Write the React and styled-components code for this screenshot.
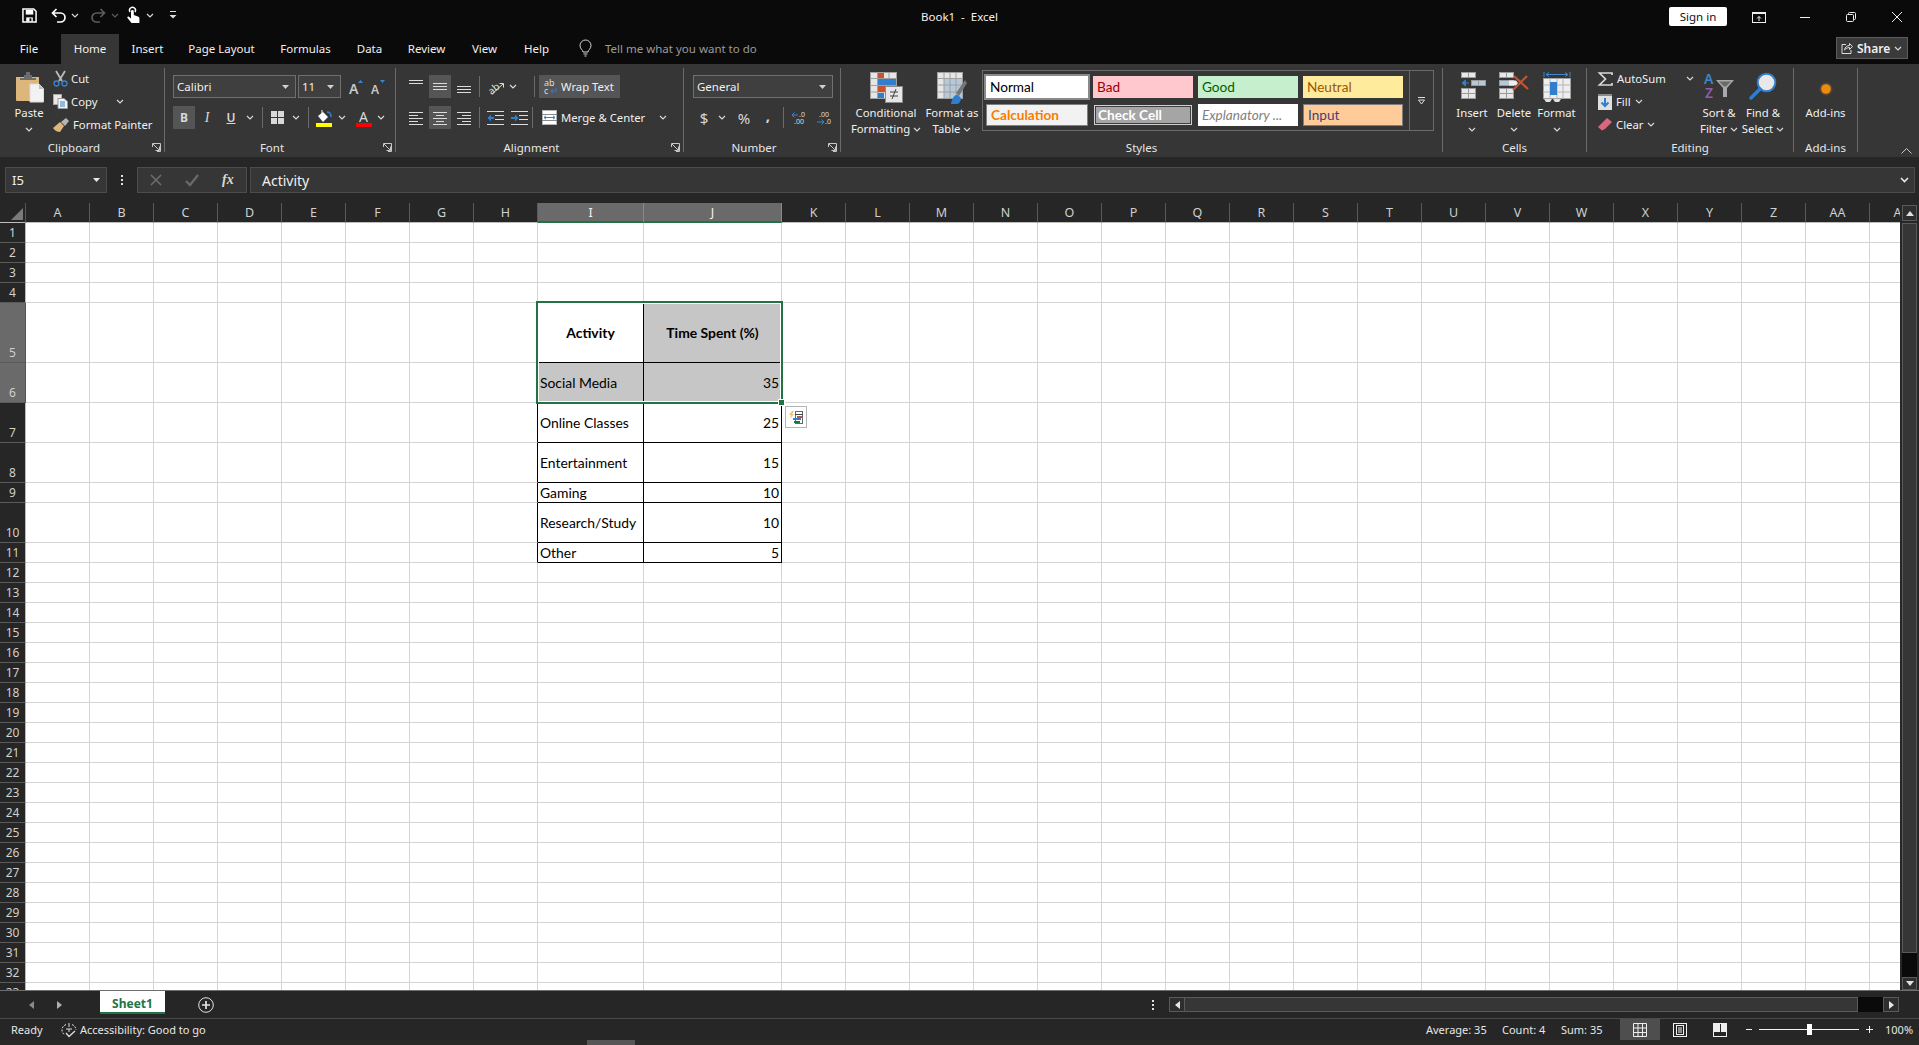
import React from 'react';
import styled, { createGlobalStyle } from 'styled-components';

const UI = '"Noto Sans", "Open Sans", sans-serif';
const CELLFONT = '"Lato", "Noto Sans", sans-serif';
const GREEN = '#217346';

const Global = createGlobalStyle`
  html, body { margin: 0; padding: 0; background: #262626; }
  * { box-sizing: border-box; }
  svg { display: block; flex: none; overflow: visible; }
`;

const Page = styled.div`
  width: 1919px;
  height: 1045px;
  overflow: hidden;
  background: #262626;
  font-family: ${UI};
  font-size: 11.3px;
  color: #f0f0f0;
  display: flex;
  flex-direction: column;
`;

/* ---------- title bar ---------- */
const TitleBar = styled.div`
  height: 34px;
  background: #0a0a0a;
  display: grid;
  grid-template-columns: 1fr auto 1fr;
  align-items: center;
`;
const Qat = styled.div`
  display: flex;
  align-items: center;
  padding-left: 22px;
  padding-bottom: 4px;
`;
const QatSlot = styled.div`
  width: ${(p) => p.$w}px;
  display: flex;
  align-items: center;
`;
const Title = styled.div`
  font-size: 11.5px;
  color: #f2f2f2;
  padding-bottom: 2px;
`;
const WinControls = styled.div`
  display: flex;
  justify-content: flex-end;
  align-items: center;
  height: 34px;
`;
const SignIn = styled.div`
  width: 58px;
  height: 19px;
  margin: 0 9px 2px 0;
  background: #fff;
  border-radius: 2px;
  color: #111;
  font-size: 11.5px;
  display: flex;
  align-items: center;
  justify-content: center;
`;
const WinBtn = styled.div`
  width: ${(p) => p.$w || 46}px;
  height: 30px;
  display: flex;
  align-items: center;
  justify-content: center;
`;

/* ---------- tab strip ---------- */
const TabStrip = styled.div`
  height: 30px;
  background: #0a0a0a;
  display: flex;
`;
const Tab = styled.div`
  width: ${(p) => p.$w}px;
  margin-left: ${(p) => p.$ml || 0}px;
  background: ${(p) => (p.$active ? '#363636' : 'transparent')};
  display: flex;
  align-items: center;
  justify-content: center;
  font-size: 11.5px;
  padding-bottom: 1px;
`;
const TellMe = styled.div`
  display: flex;
  align-items: center;
  margin-left: 17px;
  gap: 13px;
  color: #9b9b9b;
  font-size: 11.5px;
  padding-bottom: 2px;
`;
const Share = styled.div`
  margin: 3px 11px 5px auto;
  width: 72px;
  background: #3a3a3a;
  border: 1px solid #5c5c5c;
  display: flex;
  align-items: center;
  gap: 4px;
  padding-left: 4px;
  font-size: 12px;
  font-weight: 600;
`;

/* ---------- ribbon ---------- */
const Ribbon = styled.div`
  height: 93px;
  background: #363636;
  display: flex;
  position: relative;
`;
const Group = styled.div`
  width: ${(p) => p.$w}px;
  margin: 4px 0 5px;
  border-right: 1px solid #6b6b6b;
  display: flex;
  flex-direction: column;
`;
const GroupBody = styled.div`
  flex: 1;
  display: flex;
  padding-left: ${(p) => p.$pl || 0}px;
  min-height: 0;
`;
const GroupLabel = styled.div`
  height: 16px;
  margin-bottom: -4px;
  padding-right: ${(p) => (p.$launcher ? 16 : 0)}px;
  line-height: 16px;
  text-align: center;
  position: relative;
  font-size: 11.5px;
  color: #e6e6e6;
`;
const Launcher = styled.span`
  position: absolute;
  right: 3px;
  top: 3px;
`;
const Collapse = styled.span`
  position: absolute;
  right: 7px;
  bottom: 3px;
`;
const ToolRows = styled.div`
  display: flex;
  flex-direction: column;
  gap: 8px;
  padding-top: 7px;
  margin-left: ${(p) => p.$ml || 0}px;
`;
const ToolRow = styled.div`
  height: 23px;
  display: flex;
  align-items: center;
`;
const Tool = styled.div`
  width: ${(p) => p.$w}px;
  height: 23px;
  margin-left: ${(p) => p.$ml || 0}px;
  background: ${(p) => (p.$on ? '#555555' : 'transparent')};
  display: flex;
  align-items: center;
  justify-content: ${(p) => (p.$start ? 'flex-start' : 'center')};
  gap: 4px;
  padding-left: ${(p) => p.$pl || 0}px;
  white-space: nowrap;
`;
const Glyph = styled.span`
  font-family: ${(p) => (p.$serif ? '"Liberation Serif", serif' : UI)};
  font-size: ${(p) => p.$size || 12}px;
  font-weight: ${(p) => p.$weight || 400};
  font-style: ${(p) => (p.$italic ? 'italic' : 'normal')};
  text-decoration: ${(p) => (p.$under ? 'underline' : 'none')};
  color: #d8d8d8;
  margin-bottom: ${(p) => p.$lift || 0}px;
`;
const Gap = styled.span`
  width: ${(p) => p.$w}px;
  flex: none;
`;
const Sep = styled.div`
  width: 1px;
  height: 21px;
  background: #6b6b6b;
  margin: 0 ${(p) => p.$r || 0}px 0 ${(p) => p.$l || 0}px;
`;
const Select = styled.div`
  width: ${(p) => p.$w}px;
  height: 23px;
  margin-right: ${(p) => p.$mr || 0}px;
  background: #3f3f3f;
  border: 1px solid #6f6f6f;
  padding: 0 6px 0 3px;
  display: flex;
  align-items: center;
  justify-content: space-between;
  font-size: 11.5px;
`;
const Stack = styled.div`
  width: ${(p) => p.$w}px;
  margin-left: ${(p) => p.$ml || 0}px;
  display: flex;
  flex-direction: column;
`;
const StackRow = styled.div`
  height: 23px;
  padding-bottom: 2px;
  display: flex;
  align-items: center;
  gap: ${(p) => p.$gap || 3}px;
  white-space: nowrap;
`;
const BigBtn = styled.div`
  width: ${(p) => p.$w}px;
  margin-left: ${(p) => p.$ml || 0}px;
  padding-top: ${(p) => p.$pt ?? 4}px;
  display: flex;
  flex-direction: column;
  align-items: center;
  text-align: center;
  line-height: 16px;
  white-space: nowrap;
`;
const IconSlot = styled.div`
  height: ${(p) => p.$h || 33}px;
  display: flex;
  align-items: ${(p) => (p.$center ? 'center' : 'flex-start')};
  justify-content: center;
`;
const BtnLine = styled.div`
  height: 16px;
  display: flex;
  align-items: center;
  justify-content: center;
  gap: 3px;
`;

/* styles gallery */
const Gallery = styled.div`
  margin: 2px 0 0 3px;
  width: 428px;
  height: 61px;
  border: 1px solid #6b6b6b;
  padding: 5px 0 0 3px;
  display: grid;
  grid-template-columns: 102px 100px 100px 100px;
  grid-auto-rows: 22px;
  column-gap: 5px;
  row-gap: 6px;
`;
const GalleryMore = styled.div`
  margin-top: 2px;
  width: 24px;
  height: 61px;
  border: 1px solid #6b6b6b;
  border-left: 0;
  display: flex;
  align-items: center;
  justify-content: center;
`;
const StyleCell = styled.div`
  background: ${(p) => p.$bg};
  color: ${(p) => p.$fg};
  font-family: ${CELLFONT};
  font-size: 13.6px;
  font-weight: ${(p) => (p.$bold ? 700 : 400)};
  font-style: ${(p) => (p.$italic ? 'italic' : 'normal')};
  border: ${(p) => (p.$border ? `1px solid ${p.$border}` : '0')};
  outline: ${(p) => p.$ring || 'none'};
  box-shadow: ${(p) => (p.$inner ? `inset 0 0 0 1px ${p.$inner}` : 'none')};
  margin: ${(p) => (p.$inner ? 1 : 0)}px;
  padding-left: ${(p) => (p.$inner ? 3 : 4)}px;
  display: flex;
  align-items: center;
  overflow: hidden;
  white-space: nowrap;
`;

/* ---------- formula bar ---------- */
const FormulaBar = styled.div`
  height: 46px;
  background: #262626;
  padding: 10px 4px 10px 5px;
  display: flex;
`;
const NameBox = styled.div`
  width: 102px;
  background: #363636;
  border: 1px solid #4c4c4c;
  padding: 0 6px 0 6px;
  display: flex;
  align-items: center;
  justify-content: space-between;
  font-size: 13px;
`;
const BarDots = styled.div`
  width: 30px;
  display: flex;
  align-items: center;
  justify-content: center;
`;
const FxBox = styled.div`
  width: 110px;
  background: #363636;
  border: 1px solid #4c4c4c;
  margin-right: 3px;
  display: flex;
  align-items: center;
  padding-left: 12px;
  gap: 23px;
`;
const FxText = styled.span`
  font-family: "Liberation Serif", serif;
  font-style: italic;
  font-weight: 700;
  font-size: 14px;
  color: #d8d8d8;
`;
const FormulaInput = styled.div`
  flex: 1;
  background: #363636;
  border: 1px solid #4c4c4c;
  padding: 0 5px 0 11px;
  display: flex;
  align-items: center;
  justify-content: space-between;
  font-size: 14px;
`;

/* ---------- sheet ---------- */
const SheetArea = styled.div`
  height: 787px;
  display: flex;
`;
const Viewport = styled.div`
  width: 1900px;
  height: 787px;
  position: relative;
  overflow: hidden;
  background: #fff;
`;
const Grid = styled.div`
  display: grid;
  grid-template-columns: ${(p) => p.$cols};
  grid-template-rows: ${(p) => p.$rows};
  width: max-content;
`;
const Corner = styled.div`
  background: #262626;
  border-bottom: 1px solid #bdbdbd;
  border-right: 1px solid #555;
  display: flex;
  align-items: flex-end;
  justify-content: flex-end;
  padding: 0 2px 2px 0;
`;
const ColHead = styled.div`
  background: ${(p) => (p.$sel ? '#6a6a6a' : '#262626')};
  color: ${(p) => (p.$sel ? '#f2f2f2' : '#d0d0d0')};
  border-right: 1px solid ${(p) => (p.$sel ? '#8a8a8a' : '#5a5a5a')};
  border-bottom: ${(p) => (p.$sel ? `2px solid ${GREEN}` : '1px solid #bdbdbd')};
  font-size: 12.5px;
  display: flex;
  align-items: center;
  justify-content: center;
`;
const RowHead = styled.div`
  background: ${(p) => (p.$sel ? '#6a6a6a' : '#262626')};
  color: #d0d0d0;
  border-right: 1px solid ${(p) => (p.$sel ? GREEN : '#bdbdbd')};
  border-bottom: 1px solid #5a5a5a;
  font-size: 12px;
  line-height: 18px;
  display: flex;
  align-items: flex-end;
  justify-content: center;
`;
const Cell = styled.div`
  background: ${(p) => (p.$shade ? '#c6c6c6' : '#fff')};
  border-right: 1px solid ${(p) => (p.$right ? '#000' : '#d4d4d4')};
  border-bottom: 1px solid ${(p) => (p.$bottom ? '#000' : '#d4d4d4')};
  color: #000;
  font-family: ${CELLFONT};
  font-size: 13.9px;
  font-weight: ${(p) => (p.$head ? 700 : 400)};
  display: flex;
  align-items: center;
  justify-content: ${(p) => p.$align || 'flex-start'};
  padding: 0 2px;
  white-space: nowrap;
  overflow: hidden;
`;
const Selection = styled.div`
  position: absolute;
  left: 536px;
  top: 98px;
  width: 247px;
  height: 103px;
  border: 2px solid ${GREEN};
  box-shadow: inset 0 0 0 1px #fff;
`;
const FillHandle = styled.div`
  position: absolute;
  right: -4px;
  bottom: -4px;
  width: 7px;
  height: 7px;
  background: ${GREEN};
  border: 1px solid #fff;
`;
const QuickAnalysis = styled.div`
  position: absolute;
  left: 785px;
  top: 203px;
  width: 22px;
  height: 22px;
  background: #fff;
  border: 1px solid #b4b4b4;
  display: flex;
  align-items: center;
  justify-content: center;
`;
const VScroll = styled.div`
  width: 19px;
  height: 787px;
  background: #262626;
  padding: 2px 2px 0 2px;
  display: flex;
  flex-direction: column;
`;
const ScrollBtn = styled.div`
  height: ${(p) => p.$h}px;
  width: ${(p) => p.$w || 'auto'};
  background: #2e2e2e;
  border: 1px solid #5a5a5a;
  display: flex;
  align-items: center;
  justify-content: center;
`;
const VThumb = styled.div`
  margin-top: 2px;
  height: 730px;
  background: #363636;
  border: 1px solid #5a5a5a;
`;
const VTrack = styled.div`
  flex: 1;
  background: #0a0a0a;
`;

/* ---------- sheet tabs ---------- */
const TabsBar = styled.div`
  height: 28px;
  background: #262626;
  border-top: 1px solid #6e6e6e;
  display: flex;
  align-items: flex-start;
`;
const TabNav = styled.div`
  width: 100px;
  height: 27px;
  display: flex;
  align-items: center;
  padding-left: 29px;
  gap: 23px;
`;
const SheetTab = styled.div`
  width: 65px;
  height: 23px;
  padding-top: 3px;
  background: #fff;
  border-bottom: 2px solid ${GREEN};
  color: ${GREEN};
  font-size: 12px;
  font-weight: 700;
  display: flex;
  align-items: center;
  justify-content: center;
`;
const AddSheet = styled.div`
  margin-left: 33px;
  height: 27px;
  display: flex;
  align-items: center;
`;
const HScrollWrap = styled.div`
  margin: 6px 0 0 auto;
  padding-right: 20px;
  display: flex;
  align-items: center;
`;
const TabDots = styled.div`
  width: 31px;
  display: flex;
  justify-content: center;
  margin-right: 1px;
`;
const HTrack = styled.div`
  width: 698px;
  height: 15px;
  display: flex;
  background: #0a0a0a;
`;
const HThumb = styled.div`
  width: 673px;
  background: #363636;
  border: 1px solid #5a5a5a;
  border-left: 0;
`;
const HSpacer = styled.div`
  flex: 1;
`;

/* ---------- status bar ---------- */
const StatusBar = styled.div`
  height: 22px;
  background: #262626;
  border-top: 1px solid #4a4a4a;
  display: flex;
  align-items: center;
  font-size: 11px;
  color: #e6e6e6;
`;
const Ready = styled.div`
  margin-left: 11px;
  width: 50px;
`;
const A11y = styled.div`
  display: flex;
  align-items: center;
  gap: 3px;
`;
const Stats = styled.div`
  margin-left: auto;
  display: flex;
  align-items: center;
  height: 21px;
`;
const Stat = styled.div`
  width: ${(p) => p.$w}px;
`;
const ViewBtn = styled.div`
  width: ${(p) => p.$w || 40}px;
  height: 21px;
  background: ${(p) => (p.$on ? '#4e4e4e' : 'transparent')};
  display: flex;
  align-items: center;
  justify-content: center;
`;
const ZoomBox = styled.div`
  display: flex;
  align-items: center;
  margin-left: 6px;
`;
const ZoomTrack = styled.div`
  width: 100px;
  height: 1px;
  margin: 0 7px;
  background: #f0f0f0;
  position: relative;
`;
const ZoomThumb = styled.div`
  position: absolute;
  left: 48px;
  top: -5px;
  width: 5px;
  height: 11px;
  background: #fff;
`;
const ZoomPct = styled.div`
  width: 34px;
  margin-left: 12px;
`;
const Strip = styled.div`
  height: 5px;
  background: #2b2927;
  display: flex;
  padding-left: 587px;
`;
const StripBlock = styled.div`
  width: 48px;
  background: #565656;
`;

/* ---------- icons ---------- */
const Caret = ({ c = '#d8d8d8' }) => (
  <svg width="8" height="5" viewBox="0 0 8 5"><path d="M1 1l3 3 3-3" fill="none" stroke={c} strokeWidth="1.2" /></svg>
);
const SolidCaret = ({ c = '#d0d0d0', w = 7 }) => (
  <svg width={w} height="4" viewBox="0 0 7 4"><path d="M0 0h7L3.500 4z" fill={c} /></svg>
);
const SaveIcon = () => (
  <svg width="15" height="15" viewBox="0 0 16 16"><path d="M1 1h11.500L15 3.500V15H1z" fill="none" stroke="#fff" strokeWidth="1.600" /><rect x="4" y="2" width="8" height="5" fill="#fff" /><rect x="4.500" y="10" width="7" height="4.500" fill="#fff" /><rect x="8" y="11" width="2" height="3" fill="#0a0a0a" /></svg>
);
const UndoIcon = ({ c = '#fff' }) => (
  <svg width="16" height="15" viewBox="0 0 16 15"><path d="M5.500 1L1.500 5l4 4M2 5h7.500a4.500 4.500 0 0 1 0 9H6" fill="none" stroke={c} strokeWidth="1.700" /></svg>
);
const RedoIcon = ({ c = '#5c5c5c' }) => (
  <svg width="16" height="15" viewBox="0 0 16 15"><path d="M10.500 1l4 4-4 4M14 5H6.500a4.500 4.500 0 0 0 0 9H10" fill="none" stroke={c} strokeWidth="1.700" /></svg>
);
const TouchIcon = () => (
  <svg width="15" height="18" viewBox="0 0 15 18"><path d="M4 6a3 3 0 1 1 5 0" fill="none" stroke="#fff" strokeWidth="1.400" /><path d="M5 5.500a1.400 1.400 0 0 1 2.800 0V9l4 1.400c1 .4 1.600 1 1.600 2.100V17H5.500L1.500 12c-.7-1 .5-2 1.400-1.200L5 12.400z" fill="#fff" /></svg>
);
const CustomizeIcon = () => (
  <svg width="8" height="8" viewBox="0 0 8 8"><rect x="1" y="0" width="6" height="1" fill="#ddd" /><path d="M.5 4h7L4 7.500z" fill="#ddd" /></svg>
);
const RibbonModeIcon = () => (
  <svg width="14" height="11" viewBox="0 0 14 11"><rect x=".5" y=".5" width="13" height="10" fill="none" stroke="#eee" /><rect x="1" y="1" width="12" height="1" fill="#eee" /><path d="M7 9V4.500M5 6.500l2-2 2 2" fill="none" stroke="#eee" /></svg>
);
const MinIcon = () => <svg width="10" height="1" viewBox="0 0 10 1"><rect width="10" height="1" fill="#eee" /></svg>;
const RestoreIcon = () => (
  <svg width="10" height="10" viewBox="0 0 10 10"><rect x=".5" y="2.500" width="7" height="7" rx="1" fill="none" stroke="#eee" /><path d="M2.500 2.500V1.500a1 1 0 0 1 1-1h5a1 1 0 0 1 1 1v5a1 1 0 0 1-1 1h-1" fill="none" stroke="#eee" /></svg>
);
const CloseIcon = () => (
  <svg width="10" height="10" viewBox="0 0 10 10"><path d="M0 0l10 10M10 0L0 10" stroke="#eee" /></svg>
);
const BulbIcon = () => (
  <svg width="13" height="17" viewBox="0 0 13 17"><path d="M4 12c0-2-3-3-3-6.500a5.500 5.500 0 0 1 11 0C12 9 9 10 9 12z" fill="none" stroke="#d8d8d8" /><path d="M4.500 14h4M5.500 16h2" stroke="#d8d8d8" /></svg>
);
const ShareIcon = () => (
  <svg width="12" height="12" viewBox="0 0 12 12"><path d="M5 2.500H1v9h9V8" fill="none" stroke="#ddd" /><path d="M3.500 8c.5-3 2.500-4.500 5-4.500V1.500L11.500 4.500 8.500 7.500V5.500c-2 0-3.500 1-5 2.500z" fill="none" stroke="#ddd" /></svg>
);
const PasteIcon = () => (
  <svg width="29" height="34" viewBox="0 0 29 34">
    <path d="M1 6h23v24H2a1 1 0 0 1-1-1z" fill="#dcb67a" />
    <path d="M9 4h2V1h4v3h2v3h4v2H5V7h4z" fill="#6d6d6d" />
    <path d="M15 13h9l4.500 4.500V31H15z" fill="#f2f2f2" stroke="#dcdcdc" />
    <path d="M24 13v5h4.500z" fill="#bdbdbd" />
  </svg>
);
const CutIcon = () => (
  <svg width="15" height="16" viewBox="0 0 15 16">
    <path d="M3 0l6 10M12 0L6 10" stroke="#b9b9b9" strokeWidth="1.800" />
    <circle cx="3.500" cy="12.500" r="2.500" fill="none" stroke="#3a86d0" strokeWidth="1.300" />
    <circle cx="11.500" cy="12.500" r="2.500" fill="none" stroke="#3a86d0" strokeWidth="1.300" />
  </svg>
);
const CopyIcon = () => (
  <svg width="15" height="15" viewBox="0 0 15 15">
    <rect x=".5" y=".5" width="8" height="10" fill="#e8e8e8" stroke="#aaa" />
    <path d="M5 4.500h6l3.500 3v7H5z" fill="#f4f4f4" stroke="#999" />
    <path d="M7 8h5M7 10h5M7 12h5" stroke="#2f7fce" />
  </svg>
);
const PainterIcon = () => (
  <svg width="17" height="15" viewBox="0 0 17 15">
    <path d="M0 11l7-6 4 4-4 6c-2 0-5-1-7-4z" fill="#dcb67a" />
    <path d="M8 5l5-4 3 3-4 5z" fill="#b5b5b5" />
  </svg>
);
const LauncherIcon = () => (
  <svg width="9" height="9" viewBox="0 0 9 9"><path d="M.5 4V.5H8.500V8.500H5" fill="none" stroke="#c8c8c8" /><path d="M1 1l6 6M3.500 7.500H7.500V3.500" fill="none" stroke="#c8c8c8" /></svg>
);
const GrowFont = ({ up }) => (
  <svg width="15" height="14" viewBox="0 0 15 14">
    <text x="0" y="14" fontSize={up ? 14 : 12} fontFamily="Noto Sans" fontWeight="600" fill="#c8c8c8">A</text>
    <path d={up ? 'M9 3l2.500-3L14 3z' : 'M9 0h5l-2.500 3z'} fill="#3a86d0" />
  </svg>
);
const BordersIcon = () => (
  <svg width="13" height="13" viewBox="0 0 13 13"><rect width="13" height="13" fill="#d8d8d8" /><path d="M6.500 0v13M0 6.500h13" stroke="#363636" /></svg>
);
const FillIcon = () => (
  <svg width="17" height="18" viewBox="0 0 17 18">
    <path d="M2 7l5-4 5 5-5 5z" fill="#fff" />
    <path d="M6 1v5" stroke="#fff" />
    <path d="M11 3c3 0 4 2 4 5" fill="none" stroke="#2f7fce" strokeWidth="1.600" />
    <rect x="0" y="14" width="16" height="4" fill="#ffff00" />
  </svg>
);
const FontColorIcon = () => (
  <svg width="16" height="18" viewBox="0 0 16 18">
    <text x="3" y="13" fontSize="14" fontFamily="Noto Sans" fill="#d8d8d8">A</text>
    <rect x="0" y="14" width="16" height="4" fill="#ff0000" />
  </svg>
);
const Lines = ({ rows, w = 15, h = 15 }) => (
  <svg width={w} height={h} viewBox={`0 0 ${w} ${h}`} shapeRendering="crispEdges">
    {rows.map(([x, y, lw, c], i) => <rect key={i} x={x} y={y} width={lw} height="1" fill={c || '#dcdcdc'} />)}
  </svg>
);
const AL_TOP = [[0, 1, 14], [0, 4, 14]];
const AL_MID = [[0, 4, 14], [0, 7, 14], [0, 10, 14]];
const AL_BOT = [[0, 7, 14], [0, 10, 14], [0, 13, 14]];
const AL_LEFT = [[0, 2, 14], [0, 5, 9], [0, 8, 14], [0, 11, 9], [0, 14, 14]];
const AL_CENTER = [[0, 2, 14], [3, 5, 8], [0, 8, 14], [3, 11, 8], [0, 14, 14]];
const AL_RIGHT = [[0, 2, 14], [5, 5, 9], [0, 8, 14], [5, 11, 9], [0, 14, 14]];
const OrientIcon = () => (
  <svg width="18" height="17" viewBox="0 0 18 17">
    <text x="0" y="13" fontSize="10" fontFamily="Noto Sans" fill="#ddd" transform="rotate(-40 8 9)">ab</text>
    <path d="M5 16L16 6M12.500 5.500H16.500V9.500" fill="none" stroke="#ddd" />
  </svg>
);
const IndentIcon = ({ dir }) => (
  <svg width="17" height="14" viewBox="0 0 17 14">
    <path d="M0 .5h17M8 4.500h9M8 8.500h9M0 13.500h17" stroke="#dcdcdc" />
    <path d={dir === 'in' ? 'M0 6h4V3.500L7.500 7 4 10.500V8H0z' : 'M7 6H4V3.500L.5 7 4 10.500V8h3z'} fill="#2f7fce" />
  </svg>
);
const WrapIcon = () => (
  <svg width="13" height="16" viewBox="0 0 13 16">
    <text x="0" y="7" fontSize="9" fontFamily="Noto Sans" fill="#ddd">ab</text>
    <text x="0" y="15" fontSize="9" fontFamily="Noto Sans" fill="#ddd">c</text>
    <path d="M12 9v3H7M9 10l-2 2 2 2" fill="none" stroke="#2f7fce" />
  </svg>
);
const MergeIcon = () => (
  <svg width="15" height="15" viewBox="0 0 15 15">
    <rect x=".5" y=".5" width="14" height="14" fill="#fff" stroke="#b5b5b5" />
    <path d="M0 4.500h15M0 10.500h15" stroke="#8a8a8a" />
    <path d="M2 7.500h11M4 5.800L2 7.500l2 1.700M11 5.800l2 1.700-2 1.700" fill="none" stroke="#2f7fce" />
  </svg>
);
const DecIcon = ({ inc }) => (
  <svg width="15" height="14" viewBox="0 0 15 14">
    {inc ? (
      <>
        <path d="M7 4H1M3.500 1.500L1 4l2.500 2.500" fill="none" stroke="#3a86d0" />
        <text x="8" y="6" fontSize="7" fontFamily="Noto Sans" fill="#ddd">.0</text>
        <text x="3" y="13" fontSize="7" fontFamily="Noto Sans" fill="#ddd">.00</text>
      </>
    ) : (
      <>
        <text x="3" y="6" fontSize="7" fontFamily="Noto Sans" fill="#ddd">.00</text>
        <path d="M1 11h7M5.500 8.500L8 11l-2.500 2.500" fill="none" stroke="#3a86d0" />
        <text x="9" y="13" fontSize="7" fontFamily="Noto Sans" fill="#ddd">.0</text>
      </>
    )}
  </svg>
);
const CondIcon = () => (
  <svg width="33" height="31" viewBox="0 0 33 31">
    <rect x=".5" y=".5" width="26" height="26" fill="#e6e6e6" stroke="#a0a0a0" />
    <path d="M7.500 0v27M19 0v27M0 6.500h27M0 13.500h27M0 20h27" stroke="#a0a0a0" />
    <rect x="8" y="1" width="6" height="5" fill="#c9512d" />
    <rect x="8" y="7" width="18" height="6" fill="#2f7fce" />
    <rect x="8" y="14" width="10" height="6" fill="#c9512d" />
    <rect x="8" y="21" width="6" height="5" fill="#2f7fce" />
    <rect x="15.500" y="14.500" width="17" height="16" fill="#e6e6e6" stroke="#8a8a8a" />
    <path d="M20 20h8M20 24h8M22 27l4-10" stroke="#444" fill="none" />
  </svg>
);
const TableIcon = () => (
  <svg width="30" height="32" viewBox="0 0 30 32">
    <rect x=".5" y=".5" width="25" height="26" fill="#b7c8d8" stroke="#a0a0a0" />
    <rect x="1" y="1" width="24" height="5" fill="#e6e6e6" />
    <rect x="1" y="7" width="6" height="19" fill="#e6e6e6" />
    <path d="M7 0v27M13 0v27M19 0v27M0 6.500h26M0 13h26M0 20h26" stroke="#a0a0a0" />
    <path d="M28 8l-9 13 3 3 8-13z" fill="#777" />
    <path d="M14 32c1-6 4-10 7-9l3 3c0 3-2 6-4 6z" fill="#2f7fce" />
  </svg>
);
const InsertIcon = () => (
  <svg width="27" height="27" viewBox="0 0 27 27">
    <rect x="2.500" y=".5" width="14" height="5" fill="#e8e8e8" stroke="#9a9a9a" />
    <path d="M9.500 0v6" stroke="#9a9a9a" />
    <rect x="12.500" y="8.500" width="14" height="5" fill="#b7c8d8" stroke="#9a9a9a" />
    <path d="M19.500 8v6" stroke="#9a9a9a" />
    <path d="M10 11H4.500M6.500 8L3 11l3.500 3z" fill="#2f7fce" stroke="#2f7fce" />
    <rect x="2.500" y="16.500" width="14" height="10" fill="#e8e8e8" stroke="#9a9a9a" />
    <path d="M9.500 16v11M2 21.500h15" stroke="#9a9a9a" />
  </svg>
);
const DeleteIcon = () => (
  <svg width="30" height="27" viewBox="0 0 30 27">
    <rect x=".5" y=".5" width="14" height="5" fill="#e8e8e8" stroke="#9a9a9a" />
    <path d="M7.500 0v6" stroke="#9a9a9a" />
    <rect x=".5" y="8.500" width="14" height="5" fill="#b7c8d8" stroke="#9a9a9a" />
    <path d="M10 8.500h7l2 2.500-2 2.500h-7z" fill="#eee" />
    <rect x=".5" y="16.500" width="14" height="10" fill="#e8e8e8" stroke="#9a9a9a" />
    <path d="M7.500 16v11M0 21.500h15" stroke="#9a9a9a" />
    <path d="M15 4l14 13M28 4L14 18" stroke="#c9512d" strokeWidth="2.200" />
  </svg>
);
const FormatIcon = () => (
  <svg width="28" height="31" viewBox="0 0 28 31">
    <path d="M1 0v5M27 0v5M3 2.500h22M6 .5L3 2.500l3 2M22 .5l3 2-3 2" fill="none" stroke="#3a86d0" />
    <rect x=".5" y="6.500" width="27" height="20" fill="#eee" stroke="#a0a0a0" />
    <path d="M7 6v21M20 6v21M14 6v21M0 13h28M0 20h28" stroke="#b4b4b4" />
    <rect x="7" y="10" width="7" height="13" fill="#2f7fce" />
    <path d="M1 27h8l-2 3H3zM10 27h8l-2 3h-4z" fill="#e0e0e0" />
  </svg>
);
const SigmaIcon = () => (
  <svg width="15" height="14" viewBox="0 0 15 14"><path d="M14 3V1H1.500L7.500 7l-6 6H14v-2" fill="none" stroke="#d8d8d8" strokeWidth="1.700" /></svg>
);
const FillDownIcon = () => (
  <svg width="14" height="16" viewBox="0 0 14 16"><rect width="14" height="16" fill="#e0e0e0" /><rect width="14" height="2" fill="#8a8a8a" /><path d="M7 4v8M3.500 8.500L7 12l3.500-3.500" fill="none" stroke="#2f7fce" strokeWidth="2" /></svg>
);
const EraserIcon = () => (
  <svg width="14" height="13" viewBox="0 0 14 13"><path d="M9 0l5 4-7 7-3 1.500L0 9z" fill="#d9687e" /></svg>
);
const SortIcon = () => (
  <svg width="30" height="27" viewBox="0 0 30 27">
    <text x="0" y="12" fontSize="14" fontWeight="600" fontFamily="Noto Sans" fill="#3a86d0">A</text>
    <text x="1" y="26" fontSize="14" fontWeight="600" fontFamily="Noto Sans" fill="#8f5bb5">Z</text>
    <path d="M12 8h18l-7 8v9h-4v-9z" fill="#a8a8a8" />
    <path d="M15 9.500h12l-5 5h-2z" fill="#6a6a6a" />
  </svg>
);
const FindIcon = () => (
  <svg width="28" height="28" viewBox="0 0 28 28">
    <circle cx="17.500" cy="10.500" r="8.800" fill="#e8e8e8" stroke="#2f7fce" strokeWidth="2" />
    <path d="M11 17L2 26" stroke="#2f7fce" strokeWidth="3.500" strokeLinecap="round" />
  </svg>
);
const AddinDot = () => (
  <svg width="14" height="14" viewBox="0 0 14 14"><circle cx="7" cy="7" r="6.500" fill="#7a5a30" opacity=".5" /><circle cx="7" cy="7" r="4.800" fill="#ee8a10" /></svg>
);
const MoreIcon = () => (
  <svg width="7" height="8" viewBox="0 0 7 8"><rect width="7" height="1" fill="#ddd" /><path d="M.5 3h6L3.500 7z" fill="none" stroke="#ddd" /></svg>
);
const ChevUp = () => <svg width="11" height="6" viewBox="0 0 11 6"><path d="M.5 5.500l5-5 5 5" fill="none" stroke="#c8c8c8" /></svg>;
const ChevDown = () => <svg width="9" height="6" viewBox="0 0 9 6"><path d="M1 1l3.500 3.500L8 1" fill="none" stroke="#e8e8e8" strokeWidth="1.600" /></svg>;
const Dots = ({ c = '#e0e0e0' }) => (
  <svg width="2" height="10" viewBox="0 0 2 10"><path d="M0 0h2v2H0zM0 4h2v2H0zM0 8h2v2H0z" fill={c} /></svg>
);
const CornerMark = () => <svg width="12" height="12" viewBox="0 0 12 12"><path d="M12 0v12H0z" fill="#7a7a7a" /></svg>;
const QuickIcon = () => (
  <svg width="15" height="15" viewBox="0 0 15 15">
    <rect x="6.500" y="1.500" width="7" height="12" fill="#fff" stroke="#666" />
    <rect x="6" y="4" width="8" height="1" fill="#444" />
    <rect x="8" y="6" width="5" height="2" fill="#c9512d" />
    <rect x="4" y="8" width="8" height="2" fill="#2f7fce" />
    <rect x="5" y="11" width="6" height="2" fill={GREEN} />
    <path d="M3 1h2L3 4h2L1 9l1-4H0z" fill="#ebc27a" />
  </svg>
);
const ArrowH = ({ left, c = '#cfcfcf' }) => (
  <svg width="5" height="8" viewBox="0 0 5 8"><path d={left ? 'M5 0v8L0 4z' : 'M0 0v8l5-4z'} fill={c} /></svg>
);
const ArrowV = ({ up }) => (
  <svg width="8" height="5" viewBox="0 0 8 5"><path d={up ? 'M0 5h8L4 0z' : 'M0 0h8L4 5z'} fill="#e0e0e0" /></svg>
);
const PlusCircle = () => (
  <svg width="16" height="16" viewBox="0 0 16 16"><circle cx="8" cy="8" r="7.300" fill="none" stroke="#e4e4e4" /><path d="M8 4v8M4 8h8" stroke="#e4e4e4" strokeWidth="1.700" /></svg>
);
const A11yIcon = () => (
  <svg width="16" height="16" viewBox="0 0 16 16">
    <path d="M5 2.500C2.500 3.500 1 5.500 1 8c0 2 1 4 3 5" fill="none" stroke="#ddd" strokeDasharray="2 1.300" />
    <path d="M11 2.500c2.500 1 4 3 4 5.500" fill="none" stroke="#ddd" strokeDasharray="2 1.300" />
    <path d="M8 1v4M5 7h6M8 7v3" stroke="#ddd" />
    <path d="M5 11l3 3.500L14 9" fill="none" stroke="#ddd" strokeWidth="1.300" />
  </svg>
);
const NormalView = () => (
  <svg width="14" height="14" viewBox="0 0 14 14"><path d="M.5.5h13v13H.5zM5 0v14M9.500 0v14M0 5h14M0 9.500h14" fill="none" stroke="#eee" /></svg>
);
const PageView = () => (
  <svg width="14" height="14" viewBox="0 0 14 14"><rect x=".5" y=".5" width="13" height="13" fill="none" stroke="#eee" /><rect x="3.500" y="2.500" width="7" height="9" fill="none" stroke="#eee" /><path d="M5 5h4M5 7h4M5 9h4" stroke="#eee" /></svg>
);
const BreakView = () => (
  <svg width="14" height="14" viewBox="0 0 14 14"><rect x=".5" y=".5" width="13" height="13" fill="none" stroke="#eee" /><rect x="1" y="1" width="6" height="8" fill="#eee" /><rect x="8" y="1" width="5" height="8" fill="#eee" /></svg>
);
const ZoomMinus = () => <svg width="6" height="1" viewBox="0 0 6 1"><rect width="6" height="1" fill="#eee" /></svg>;
const ZoomPlus = () => <svg width="7" height="7" viewBox="0 0 7 7"><path d="M3.500 0v7M0 3.500h7" stroke="#eee" /></svg>;

/* ---------- data ---------- */
const TABS = [
  { name: 'File', w: 58 },
  { name: 'Home', w: 58, ml: 3, active: true },
  { name: 'Insert', w: 57 },
  { name: 'Page Layout', w: 91 },
  { name: 'Formulas', w: 77 },
  { name: 'Data', w: 51 },
  { name: 'Review', w: 63 },
  { name: 'View', w: 53 },
  { name: 'Help', w: 51 },
];

const STYLES = [
  { name: 'Normal', bg: '#fff', fg: '#000', ring: '2px solid #8a8a8a' },
  { name: 'Bad', bg: '#ffc7ce', fg: '#9c0006' },
  { name: 'Good', bg: '#c6efce', fg: '#006100' },
  { name: 'Neutral', bg: '#ffeb9c', fg: '#9c5700' },
  { name: 'Calculation', bg: '#f2f2f2', fg: '#fa7d00', bold: true, border: '#7f7f7f' },
  { name: 'Check Cell', bg: '#a5a5a5', fg: '#fff', bold: true, border: '#cfcfcf', inner: '#3f3f3f' },
  { name: 'Explanatory ...', bg: '#fff', fg: '#7f7f7f', italic: true },
  { name: 'Input', bg: '#ffcc99', fg: '#3f3f76', border: '#7f7f7f' },
];

const COLS = ['A', 'B', 'C', 'D', 'E', 'F', 'G', 'H', 'I', 'J', 'K', 'L', 'M', 'N', 'O', 'P', 'Q', 'R', 'S', 'T', 'U', 'V', 'W', 'X', 'Y', 'Z', 'AA', 'AB'];
const colWidth = (c) => (c === 'I' ? 106 : c === 'J' ? 138 : 64);
const TALL = { 5: 60, 6: 40, 7: 40, 8: 40, 10: 40 };
const ROWS = Array.from({ length: 33 }, (_, i) => i + 1);
const TABLE = {
  5: ['Activity', 'Time Spent (%)'],
  6: ['Social Media', 35],
  7: ['Online Classes', 25],
  8: ['Entertainment', 15],
  9: ['Gaming', 10],
  10: ['Research/Study', 10],
  11: ['Other', 5],
};

const Sheet = () => {
  const cols = `26px ${COLS.map((c) => `${colWidth(c)}px`).join(' ')}`;
  const rows = `20px ${ROWS.map((r) => `${TALL[r] || 20}px`).join(' ')}`;
  return (
    <Grid $cols={cols} $rows={rows}>
      <Corner><CornerMark /></Corner>
      {COLS.map((c) => <ColHead key={c} $sel={c === 'I' || c === 'J'}>{c}</ColHead>)}
      {ROWS.map((r) => (
        <React.Fragment key={r}>
          <RowHead $sel={r === 5 || r === 6}>{r}</RowHead>
          {COLS.map((c) => {
            const inTable = !!TABLE[r];
            const isData = inTable && (c === 'I' || c === 'J');
            const text = isData ? TABLE[r][c === 'I' ? 0 : 1] : null;
            const head = r === 5;
            return (
              <Cell
                key={c}
                $right={isData || (inTable && c === 'H')}
                $bottom={isData || (r === 4 && (c === 'I' || c === 'J'))}
                $shade={(r === 5 && c === 'J') || (r === 6 && (c === 'I' || c === 'J'))}
                $head={isData && head}
                $align={isData && head ? 'center' : isData && c === 'J' ? 'flex-end' : 'flex-start'}
              >
                {text}
              </Cell>
            );
          })}
        </React.Fragment>
      ))}
    </Grid>
  );
};

const App = () => (
  <Page>
    <Global />
    <TitleBar>
      <Qat>
        <QatSlot $w={29}><SaveIcon /></QatSlot>
        <QatSlot $w={20}><UndoIcon /></QatSlot>
        <QatSlot $w={19}><Caret /></QatSlot>
        <QatSlot $w={21}><RedoIcon /></QatSlot>
        <QatSlot $w={15}><Caret c="#5c5c5c" /></QatSlot>
        <QatSlot $w={20}><TouchIcon /></QatSlot>
        <QatSlot $w={23}><Caret /></QatSlot>
        <QatSlot $w={10}><CustomizeIcon /></QatSlot>
      </Qat>
      <Title>Book1&nbsp; -&nbsp; Excel</Title>
      <WinControls>
        <SignIn>Sign in</SignIn>
        <WinBtn><RibbonModeIcon /></WinBtn>
        <WinBtn><MinIcon /></WinBtn>
        <WinBtn><RestoreIcon /></WinBtn>
        <WinBtn $w={45}><CloseIcon /></WinBtn>
      </WinControls>
    </TitleBar>

    <TabStrip>
      {TABS.map((t) => <Tab key={t.name} $w={t.w} $ml={t.ml} $active={t.active}>{t.name}</Tab>)}
      <TellMe><BulbIcon />Tell me what you want to do</TellMe>
      <Share><ShareIcon />Share<Caret /></Share>
    </TabStrip>

    <Ribbon>
      <Group $w={165}>
        <GroupBody $pl={9}>
          <BigBtn $w={40} $pt={3}>
            <IconSlot $h={34}><PasteIcon /></IconSlot>
            <BtnLine>Paste</BtnLine>
            <BtnLine><Caret /></BtnLine>
          </BigBtn>
          <Stack $w={110} $ml={4}>
            <StackRow><CutIcon />Cut</StackRow>
            <StackRow><CopyIcon />Copy<Gap $w={13} /><Caret /></StackRow>
            <StackRow><PainterIcon />Format Painter</StackRow>
          </Stack>
        </GroupBody>
        <GroupLabel $launcher>Clipboard<Launcher><LauncherIcon /></Launcher></GroupLabel>
      </Group>

      <Group $w={231}>
        <GroupBody $pl={8}>
          <ToolRows>
            <ToolRow>
              <Select $w={123} $mr={2}>Calibri<SolidCaret /></Select>
              <Select $w={43} $mr={7}>11<SolidCaret /></Select>
              <Tool $w={16}><GrowFont up /></Tool>
              <Tool $w={16} $ml={6}><GrowFont /></Tool>
            </ToolRow>
            <ToolRow>
              <Tool $w={22} $on><Glyph $weight={700}>B</Glyph></Tool>
              <Tool $w={24}><Glyph $serif $italic $size={14}>I</Glyph></Tool>
              <Tool $w={24}><Glyph $under $weight={600}>U</Glyph></Tool>
              <Tool $w={14}><Caret /></Tool>
              <Sep $l={5} $r={8} />
              <BordersIcon />
              <Tool $w={23}><Caret /></Tool>
              <Sep $l={1} $r={7} />
              <FillIcon />
              <Tool $w={17}><Caret /></Tool>
              <Gap $w={6} />
              <FontColorIcon />
              <Tool $w={17}><Caret /></Tool>
            </ToolRow>
          </ToolRows>
        </GroupBody>
        <GroupLabel $launcher>Font<Launcher><LauncherIcon /></Launcher></GroupLabel>
      </Group>

      <Group $w={288}>
        <GroupBody $pl={13}>
          <ToolRows>
            <ToolRow>
              <Tool $w={14}><Lines rows={AL_TOP} /></Tool>
              <Tool $w={22} $ml={6} $on><Lines rows={AL_MID} /></Tool>
              <Tool $w={14} $ml={6}><Lines rows={AL_BOT} /></Tool>
              <Sep $l={8} $r={7} />
              <OrientIcon />
              <Tool $w={15}><Caret /></Tool>
              <Gap $w={14} />
              <Sep />
            </ToolRow>
            <ToolRow>
              <Tool $w={14}><Lines rows={AL_LEFT} h={16} /></Tool>
              <Tool $w={22} $ml={6} $on><Lines rows={AL_CENTER} h={16} /></Tool>
              <Tool $w={14} $ml={6}><Lines rows={AL_RIGHT} h={16} /></Tool>
              <Sep $l={8} $r={7} />
              <IndentIcon />
              <Gap $w={7} />
              <IndentIcon dir="in" />
              <Gap $w={4} />
              <Sep />
            </ToolRow>
          </ToolRows>
          <ToolRows $ml={4}>
            <Tool $w={81} $start $pl={5} $on><WrapIcon />Wrap Text</Tool>
            <Tool $w={135} $start $pl={3}><MergeIcon />Merge &amp; Center<Gap $w={6} /><Caret /></Tool>
          </ToolRows>
        </GroupBody>
        <GroupLabel $launcher>Alignment<Launcher><LauncherIcon /></Launcher></GroupLabel>
      </Group>

      <Group $w={157}>
        <GroupBody $pl={9}>
          <ToolRows>
            <Select $w={140}>General<SolidCaret /></Select>
            <ToolRow>
              <Tool $w={22}><Glyph $size={15}>$</Glyph></Tool>
              <Tool $w={13}><Caret /></Tool>
              <Tool $w={24} $ml={4}><Glyph $size={15}>%</Glyph></Tool>
              <Tool $w={24}><Glyph $size={15} $weight={700} $lift={5}>,</Glyph></Tool>
              <Sep $l={3} $r={7} />
              <DecIcon inc />
              <Tool $w={10} />
              <DecIcon />
            </ToolRow>
          </ToolRows>
        </GroupBody>
        <GroupLabel $launcher>Number<Launcher><LauncherIcon /></Launcher></GroupLabel>
      </Group>

      <Group $w={602}>
        <GroupBody $pl={10}>
          <BigBtn $w={70}>
            <IconSlot><CondIcon /></IconSlot>
            <BtnLine>Conditional</BtnLine>
            <BtnLine>Formatting<Caret /></BtnLine>
          </BigBtn>
          <BigBtn $w={54} $ml={4}>
            <IconSlot><TableIcon /></IconSlot>
            <BtnLine>Format as</BtnLine>
            <BtnLine>Table<Caret /></BtnLine>
          </BigBtn>
          <Gallery>
            {STYLES.map((s) => (
              <StyleCell key={s.name} $bg={s.bg} $fg={s.fg} $bold={s.bold} $italic={s.italic} $border={s.border} $ring={s.ring} $inner={s.inner}>
                {s.name}
              </StyleCell>
            ))}
          </Gallery>
          <GalleryMore><MoreIcon /></GalleryMore>
        </GroupBody>
        <GroupLabel>Styles</GroupLabel>
      </Group>

      <Group $w={144}>
        <GroupBody $pl={8}>
          <BigBtn $w={42}>
            <IconSlot><InsertIcon /></IconSlot>
            <BtnLine>Insert</BtnLine>
            <BtnLine><Caret /></BtnLine>
          </BigBtn>
          <BigBtn $w={42}>
            <IconSlot><DeleteIcon /></IconSlot>
            <BtnLine>Delete</BtnLine>
            <BtnLine><Caret /></BtnLine>
          </BigBtn>
          <BigBtn $w={43}>
            <IconSlot><FormatIcon /></IconSlot>
            <BtnLine>Format</BtnLine>
            <BtnLine><Caret /></BtnLine>
          </BigBtn>
        </GroupBody>
        <GroupLabel>Cells</GroupLabel>
      </Group>

      <Group $w={207}>
        <GroupBody $pl={11}>
          <Stack $w={99}>
            <StackRow $gap={4}><SigmaIcon />AutoSum<Gap $w={12} /><Caret /></StackRow>
            <StackRow $gap={4}><FillDownIcon />Fill<Caret /></StackRow>
            <StackRow $gap={4}><EraserIcon />Clear<Caret /></StackRow>
          </Stack>
          <BigBtn $w={44}>
            <IconSlot><SortIcon /></IconSlot>
            <BtnLine>Sort &amp;</BtnLine>
            <BtnLine>Filter<Caret /></BtnLine>
          </BigBtn>
          <BigBtn $w={44}>
            <IconSlot><FindIcon /></IconSlot>
            <BtnLine>Find &amp;</BtnLine>
            <BtnLine>Select<Caret /></BtnLine>
          </BigBtn>
        </GroupBody>
        <GroupLabel>Editing</GroupLabel>
      </Group>

      <Group $w={64}>
        <GroupBody>
          <BigBtn $w={63}>
            <IconSlot $center><AddinDot /></IconSlot>
            <BtnLine>Add-ins</BtnLine>
          </BigBtn>
        </GroupBody>
        <GroupLabel>Add-ins</GroupLabel>
      </Group>
      <Collapse><ChevUp /></Collapse>
    </Ribbon>

    <FormulaBar>
      <NameBox>I5<SolidCaret c="#e8e8e8" /></NameBox>
      <BarDots><Dots /></BarDots>
      <FxBox>
        <svg width="12" height="12" viewBox="0 0 12 12"><path d="M1 1l10 10M11 1L1 11" stroke="#6a6a6a" strokeWidth="1.700" /></svg>
        <svg width="14" height="12" viewBox="0 0 14 12"><path d="M1 7l4 4 8-10" fill="none" stroke="#6a6a6a" strokeWidth="2.200" /></svg>
        <FxText>fx</FxText>
      </FxBox>
      <FormulaInput>Activity<ChevDown /></FormulaInput>
    </FormulaBar>

    <SheetArea>
      <Viewport>
        <Sheet />
        <Selection><FillHandle /></Selection>
        <QuickAnalysis><QuickIcon /></QuickAnalysis>
      </Viewport>
      <VScroll>
        <ScrollBtn $h={16}><ArrowV up /></ScrollBtn>
        <VThumb />
        <VTrack />
        <ScrollBtn $h={13}><ArrowV /></ScrollBtn>
      </VScroll>
    </SheetArea>

    <TabsBar>
      <TabNav><ArrowH left c="#8a8a8a" /><ArrowH c="#b0b0b0" /></TabNav>
      <SheetTab>Sheet1</SheetTab>
      <AddSheet><PlusCircle /></AddSheet>
      <HScrollWrap>
        <TabDots><Dots /></TabDots>
        <ScrollBtn $h={15} $w="16px"><ArrowH left c="#e8e8e8" /></ScrollBtn>
        <HTrack>
          <HThumb />
          <HSpacer />
        </HTrack>
        <ScrollBtn $h={15} $w="16px"><ArrowH c="#e8e8e8" /></ScrollBtn>
      </HScrollWrap>
    </TabsBar>

    <StatusBar>
      <Ready>Ready</Ready>
      <A11y><A11yIcon />Accessibility: Good to go</A11y>
      <Stats>
        <Stat $w={76}>Average: 35</Stat>
        <Stat $w={59}>Count: 4</Stat>
        <Stat $w={59}>Sum: 35</Stat>
        <ViewBtn $on><NormalView /></ViewBtn>
        <ViewBtn><PageView /></ViewBtn>
        <ViewBtn><BreakView /></ViewBtn>
        <ZoomBox>
          <ZoomMinus />
          <ZoomTrack><ZoomThumb /></ZoomTrack>
          <ZoomPlus />
        </ZoomBox>
        <ZoomPct>100%</ZoomPct>
      </Stats>
    </StatusBar>
    <Strip><StripBlock /></Strip>
  </Page>
);

export default App;
